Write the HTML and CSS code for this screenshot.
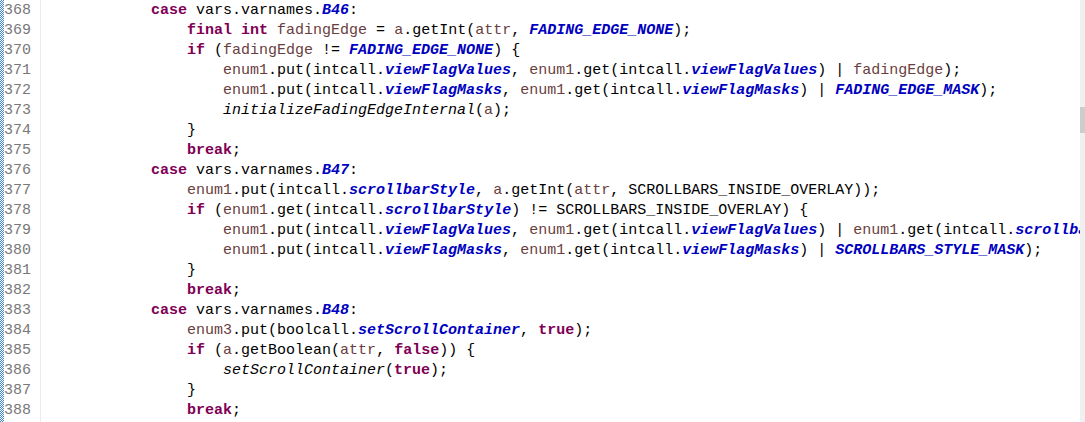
FILE: index.html
```html
<!DOCTYPE html>
<html>
<head>
<meta charset="utf-8">
<link rel="stylesheet" href="styles.css">
</head>
<body>
<div class="editor">
  <div class="strip"></div>
  <div class="gutter">
    <div class="ln">368</div><div class="ln">369</div><div class="ln">370</div><div class="ln">371</div>
    <div class="ln">372</div><div class="ln">373</div><div class="ln">374</div><div class="ln">375</div>
    <div class="ln">376</div><div class="ln">377</div><div class="ln">378</div><div class="ln">379</div>
    <div class="ln">380</div><div class="ln">381</div><div class="ln">382</div><div class="ln">383</div>
    <div class="ln">384</div><div class="ln">385</div><div class="ln">386</div><div class="ln">387</div>
    <div class="ln">388</div>
  </div>
  <div class="code">
<div class="line">            <span class="k">case</span> vars.varnames.<span class="c">B46</span>:</div>
<div class="line">                <span class="k">final</span> <span class="k">int</span> <span class="l">fadingEdge</span> = <span class="l">a</span>.getInt(<span class="l">attr</span>, <span class="c">FADING_EDGE_NONE</span>);</div>
<div class="line">                <span class="k">if</span> (<span class="l">fadingEdge</span> != <span class="c">FADING_EDGE_NONE</span>) {</div>
<div class="line">                    <span class="l">enum1</span>.put(intcall.<span class="c">viewFlagValues</span>, <span class="l">enum1</span>.get(intcall.<span class="c">viewFlagValues</span>) | <span class="l">fadingEdge</span>);</div>
<div class="line">                    <span class="l">enum1</span>.put(intcall.<span class="c">viewFlagMasks</span>, <span class="l">enum1</span>.get(intcall.<span class="c">viewFlagMasks</span>) | <span class="c">FADING_EDGE_MASK</span>);</div>
<div class="line">                    <span class="s">initializeFadingEdgeInternal</span>(<span class="l">a</span>);</div>
<div class="line">                }</div>
<div class="line">                <span class="k">break</span>;</div>
<div class="line">            <span class="k">case</span> vars.varnames.<span class="c">B47</span>:</div>
<div class="line">                <span class="l">enum1</span>.put(intcall.<span class="c">scrollbarStyle</span>, <span class="l">a</span>.getInt(<span class="l">attr</span>, SCROLLBARS_INSIDE_OVERLAY));</div>
<div class="line">                <span class="k">if</span> (<span class="l">enum1</span>.get(intcall.<span class="c">scrollbarStyle</span>) != SCROLLBARS_INSIDE_OVERLAY) {</div>
<div class="line">                    <span class="l">enum1</span>.put(intcall.<span class="c">viewFlagValues</span>, <span class="l">enum1</span>.get(intcall.<span class="c">viewFlagValues</span>) | <span class="l">enum1</span>.get(intcall.<span class="c">scrollbarStyle</span>));</div>
<div class="line">                    <span class="l">enum1</span>.put(intcall.<span class="c">viewFlagMasks</span>, <span class="l">enum1</span>.get(intcall.<span class="c">viewFlagMasks</span>) | <span class="c">SCROLLBARS_STYLE_MASK</span>);</div>
<div class="line">                }</div>
<div class="line">                <span class="k">break</span>;</div>
<div class="line">            <span class="k">case</span> vars.varnames.<span class="c">B48</span>:</div>
<div class="line">                <span class="l">enum3</span>.put(boolcall.<span class="c">setScrollContainer</span>, <span class="k">true</span>);</div>
<div class="line">                <span class="k">if</span> (<span class="l">a</span>.getBoolean(<span class="l">attr</span>, <span class="k">false</span>)) {</div>
<div class="line">                    <span class="s">setScrollContainer</span>(<span class="k">true</span>);</div>
<div class="line">                }</div>
<div class="line">                <span class="k">break</span>;</div>
  </div>
  <div class="scrollbar"><div class="thumb"></div></div>
</div>
</body>
</html>
```

FILE: styles.css
```css
html, body {
  margin: 0;
  padding: 0;
  background: #ffffff;
}

.editor {
  display: flex;
  width: 1085px;
  height: 422px;
  overflow: hidden;
  font-family: "Liberation Mono", "DejaVu Sans Mono", monospace;
  font-size: 15px;
  line-height: 20px;
}

.strip {
  width: 4px;
  flex: 0 0 4px;
  background: repeating-conic-gradient(#3f86d6 0 25%, #ffffff 0 50%) 0 0 / 2px 2px;
}

.gutter {
  flex: 0 0 36px;
  border-right: 1px solid #ececec;
  color: #787878;
  padding-top: 1px;
}

.ln {
  height: 20px;
  white-space: pre;
}

.code {
  flex: 1;
  min-width: 0;
  overflow: hidden;
  padding-left: 2px;
  padding-top: 1px;
  color: #000000;
}

.line {
  height: 20px;
  white-space: pre;
}

.k {
  color: #7f0055;
  font-weight: bold;
}

.c {
  color: #0000c0;
  font-weight: bold;
  font-style: italic;
}

.l {
  color: #6a3e3e;
}

.s {
  font-style: italic;
}

.scrollbar {
  flex: 0 0 5px;
  background: #f0f0f0;
}

.thumb {
  margin-top: 107px;
  height: 26px;
  background: #cdcdcd;
}
```
